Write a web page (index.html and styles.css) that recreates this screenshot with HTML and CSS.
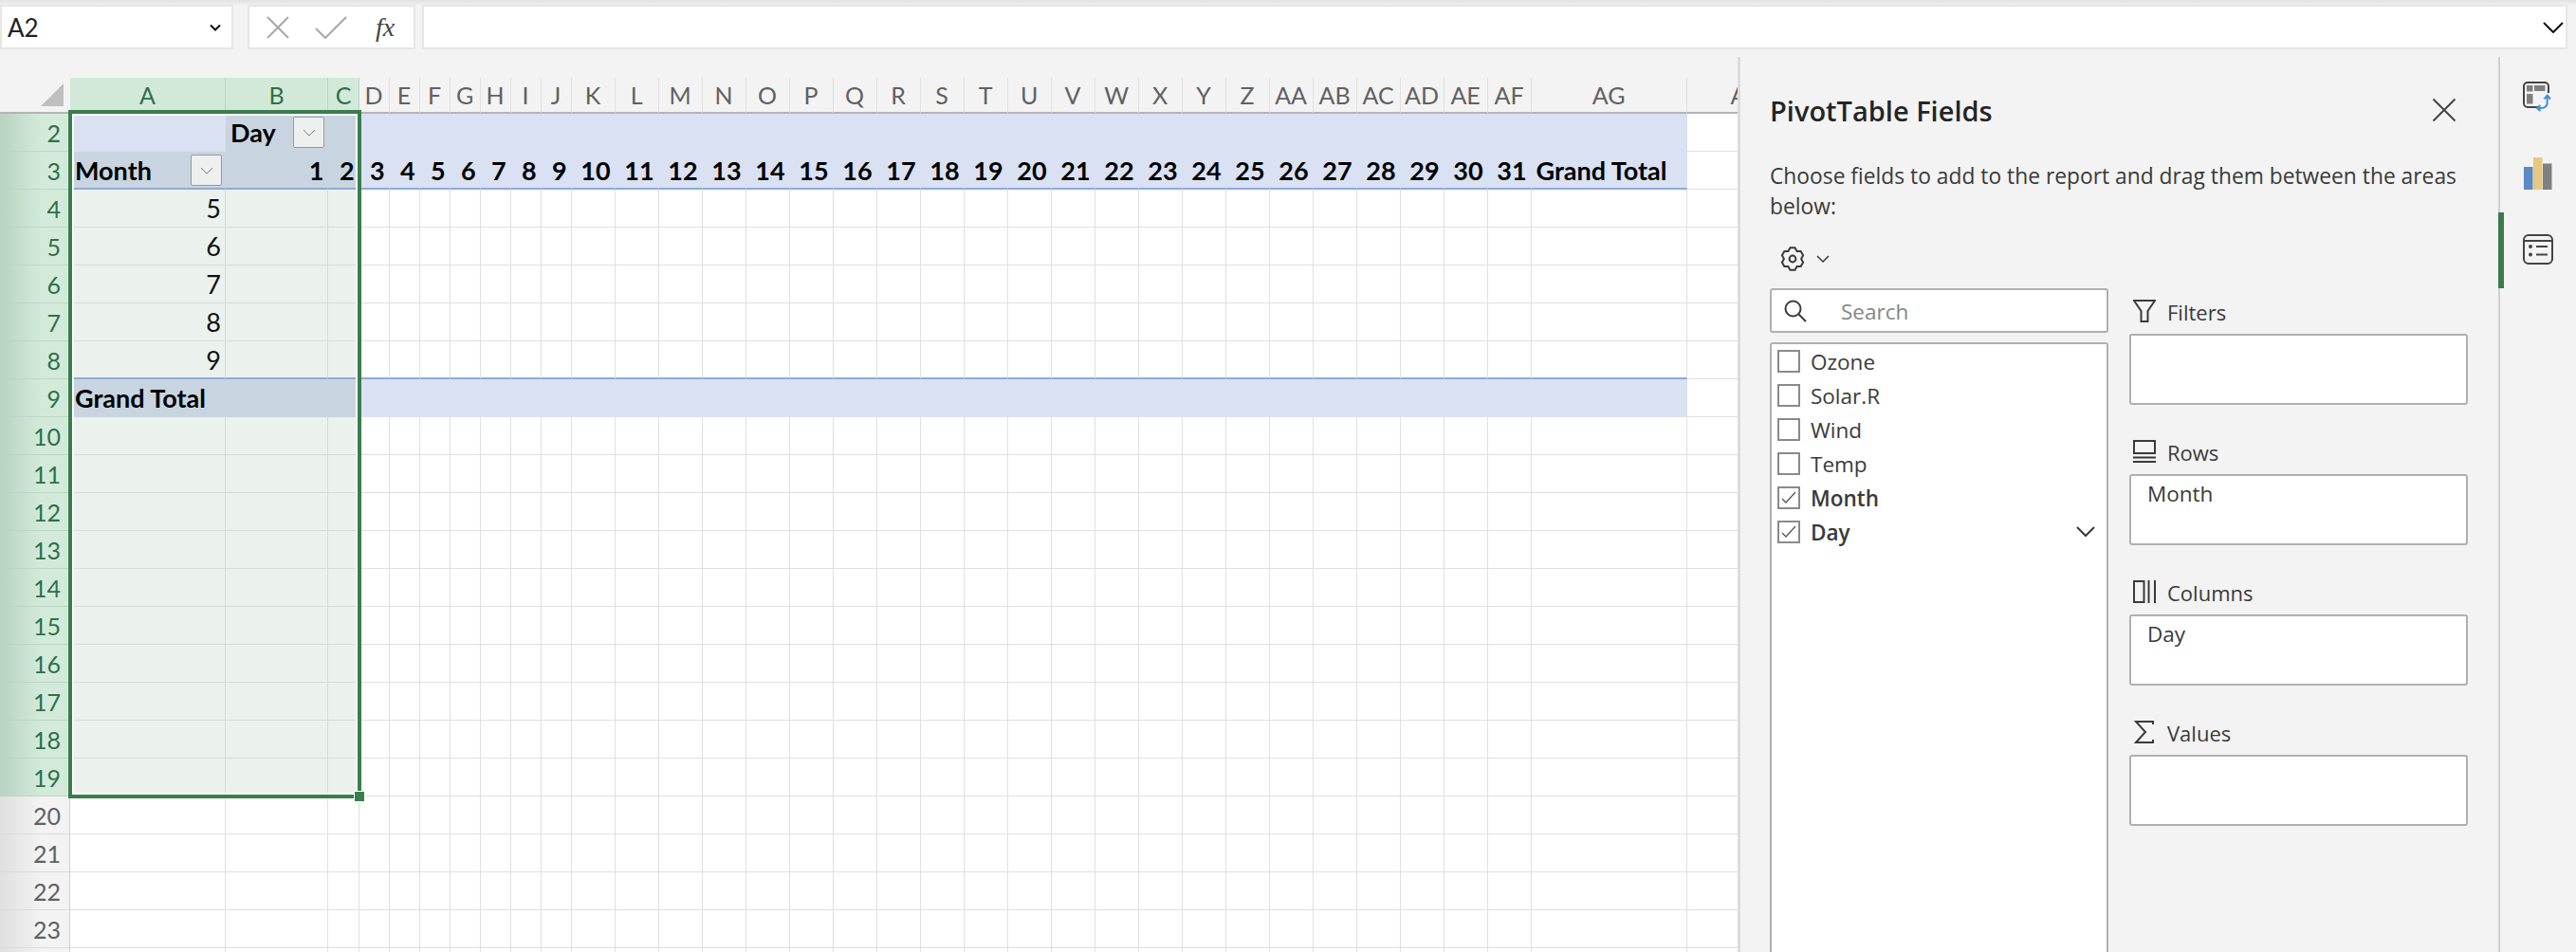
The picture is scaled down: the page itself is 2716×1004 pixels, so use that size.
FILE: index.html
```html
<!DOCTYPE html>
<html lang="en">
<head>
    <meta charset="UTF-8">
    <title>PivotTable Fields</title>
    <link rel="stylesheet" href="styles.css">
</head>
<body>
    <div class="formula-bar">
        <div class="name-box">
            <span>A2</span>
            <svg class="chev-black" width="12" height="8" viewBox="0 0 12 8"><path d="M1 1.5l5 5 5-5"/></svg>
        </div>
        <div class="formula-buttons">
            <svg class="fb-icon" width="26" height="26" viewBox="0 0 26 26"><path d="M2 2l22 22M24 2L2 24"/></svg>
            <svg class="fb-icon" width="34" height="24" viewBox="0 0 34 24"><path d="M1 13l10 10L33 1"/></svg>
            <span class="fx">fx</span>
        </div>
        <div class="formula-input">
            <svg class="chev-black" width="22" height="12" viewBox="0 0 22 12"><path d="M1 1l10 10L21 1"/></svg>
        </div>
    </div>

    <div class="main">
        <div class="sheet">
            <div class="grid" id="grid"></div>
            <div class="selection"><div class="handle"></div></div>
        </div>

        <div class="panel">
            <div class="panel-head">
                <div class="panel-title">PivotTable Fields</div>
                <svg class="close-icon" width="26" height="26" viewBox="0 0 26 26"><path d="M1.5 1.5l23 23M24.5 1.5l-23 23"/></svg>
            </div>
            <p class="panel-desc">Choose fields to add to the report and drag them between the areas below:</p>
            <div class="tools">
                <svg class="line-icon" width="28" height="28" viewBox="0 0 28 28">
                    <path d="M11.5 2.3h5l2.15 3.75 3.97-.02 2.49 4.32-2 3.65 2 3.65-2.49 4.32-3.97-.02-2.15 3.75h-5l-2.15-3.75-3.97.02-2.49-4.32 2-3.65-2-3.65 2.49-4.32 3.97.02z"/>
                    <circle cx="14" cy="14" r="3.4"/>
                </svg>
                <svg class="line-icon thin" width="14" height="8" viewBox="0 0 14 8"><path d="M1 1l6 6 6-6"/></svg>
            </div>

            <div class="panel-body">
                <div class="fields">
                    <div class="search">
                        <svg class="line-icon" width="24" height="24" viewBox="0 0 24 24"><circle cx="9.5" cy="9.5" r="8"/><path d="M15 15l8 8"/></svg>
                        <span>Search</span>
                    </div>
                    <div class="field-list">
                        <div class="field"><span class="check"></span>Ozone</div>
                        <div class="field"><span class="check"></span>Solar.R</div>
                        <div class="field"><span class="check"></span>Wind</div>
                        <div class="field"><span class="check"></span>Temp</div>
                        <div class="field on">
                            <span class="check"><svg width="16" height="14" viewBox="0 0 16 14"><path d="M1 8l4 4L15 1"/></svg></span>Month
                        </div>
                        <div class="field on">
                            <span class="check"><svg width="16" height="14" viewBox="0 0 16 14"><path d="M1 8l4 4L15 1"/></svg></span>Day
                            <svg class="line-icon field-chev" width="20" height="12" viewBox="0 0 20 12"><path d="M1 1l9 9 9-9"/></svg>
                        </div>
                    </div>
                </div>

                <div class="areas">
                    <div class="area">
                        <div class="area-label">
                            <svg class="line-icon" width="24" height="24" viewBox="0 0 24 24"><path d="M1 1h22l-7.5 11v11h-7V12z"/></svg>
                            <span>Filters</span>
                        </div>
                        <div class="area-box"></div>
                    </div>
                    <div class="area">
                        <div class="area-label">
                            <svg class="line-icon" width="24" height="24" viewBox="0 0 24 24"><path d="M1 1h22v13H1zM0 18.500h24M0 23h24"/></svg>
                            <span>Rows</span>
                        </div>
                        <div class="area-box">Month</div>
                    </div>
                    <div class="area">
                        <div class="area-label">
                            <svg class="line-icon" width="24" height="24" viewBox="0 0 24 24"><path d="M1 1h10.500v22H1zM16.500 0v24M23 0v24"/></svg>
                            <span>Columns</span>
                        </div>
                        <div class="area-box">Day</div>
                    </div>
                    <div class="area">
                        <div class="area-label">
                            <svg class="line-icon" width="24" height="24" viewBox="0 0 24 24"><path d="M21 4V1H3l10 11L3 23h18v-3"/></svg>
                            <span>Values</span>
                        </div>
                        <div class="area-box"></div>
                    </div>
                </div>
            </div>
        </div>

        <div class="rail">
            <div class="rail-mark"></div>
            <svg width="32" height="33" viewBox="0 0 32 33">
                <path class="rail-line" d="M16 27H5a4 4 0 0 1-4-4V5a4 4 0 0 1 4-4h18a4 4 0 0 1 4 4v7"/>
                <path class="rail-block" d="M4 4h6.500v6.500H4zM12 4h11.500v6H12zM4 13h6.500v10.500H4z"/>
                <path class="rail-arrow" d="M25.700 16v6q0 6-6.700 6h-3.500M22.500 18.500l3.200-4 3.300 4M18.500 25l-3.500 3 3.500 3"/>
            </svg>
            <svg width="30" height="34" viewBox="0 0 30 34">
                <path fill="#5b8ac4" d="M0 10h9.500v24H0z"/>
                <path fill="#e6c880" d="M10 0h9.500v34H10z"/>
                <path fill="#808080" d="M20 6.500h9.500V34H20z"/>
            </svg>
            <svg width="32" height="32" viewBox="0 0 32 32">
                <path class="rail-line" d="M6 1h20a5 5 0 0 1 5 5v20a5 5 0 0 1-5 5H6a5 5 0 0 1-5-5V6a5 5 0 0 1 5-5zM1 7h30M14 13h12M14 21.500h12"/>
                <circle class="rail-dot" cx="8" cy="13" r="2"/>
                <circle class="rail-dot" cx="8" cy="21.500" r="2"/>
            </svg>
        </div>
    </div>

    <script src="app.js"></script>
</body>
</html>
```

FILE: styles.css
```css
* {
    box-sizing: border-box;
}

body {
    margin: 0;
    height: 100vh;
    overflow: hidden;
    background: #f3f3f3;
    font-family: "Open Sans", sans-serif;
    color: #3a3a3a;
}

.chev-black {
    fill: none;
    stroke: #111;
    stroke-width: 2;
}

/* formula bar */
.formula-bar {
    height: 60px;
    padding: 5px 9px 8px 0;
    display: flex;
    gap: 7px;
    background: linear-gradient(#e2e2e2, #f3f3f3 6px);
}

.name-box,
.formula-buttons,
.formula-input {
    background: white;
    border: 2px solid #e6e6e6;
    display: flex;
    align-items: center;
}

.name-box {
    width: 246px;
    padding: 0 11px 0 6px;
    margin-right: 8px;
    justify-content: space-between;
    font: 26px Lato, sans-serif;
    color: #222;
}

.formula-buttons {
    width: 177px;
    padding-left: 17px;
    gap: 26px;
}

.fb-icon {
    fill: none;
    stroke: #a8a8a8;
    stroke-width: 2;
}

.fx {
    font: italic 28px "Liberation Serif", serif;
    color: #444;
    margin-left: 4px;
}

.formula-input {
    flex: 1;
    justify-content: flex-end;
    padding-right: 2px;
}

/* sheet */
.main {
    display: flex;
    height: calc(100vh - 60px);
    overflow: hidden;
}

.sheet {
    position: relative;
    width: 1832px;
    padding-top: 22px;
    overflow: hidden;
}

.grid {
    display: grid;
    grid-template-columns: 74px 164px 108.4px 32.2px repeat(7, 32px) repeat(22, 46px) 164px 129px;
    grid-template-rows: 38px;
    grid-auto-rows: 40px;
    background: white;
    font-family: Lato, sans-serif;
}

.corner,
.col-head {
    background: #f3f3f3;
    border-bottom: 2px solid #b4b4b4;
}

.corner {
    display: flex;
    justify-content: flex-end;
    align-items: flex-end;
    padding: 0 7px 6px 0;
}

.corner-mark {
    width: 24px;
    height: 24px;
    background: #bfbfbf;
    clip-path: polygon(100% 0, 100% 100%, 0 100%);
}

.col-head {
    display: flex;
    align-items: center;
    justify-content: center;
    border-right: 1px solid #e0e0e0;
    font-size: 25px;
    color: #616161;
    white-space: nowrap;
}

.col-head.sel {
    background: #d2e9da;
    border-right-color: #b4d8c1;
    color: #2e7048;
}

.row-head {
    display: flex;
    align-items: center;
    justify-content: flex-end;
    padding-right: 9px;
    background: linear-gradient(90deg, #dfdfdf, #f3f3f3 60%);
    border-right: 1px solid #d0d0d0;
    border-bottom: 1px solid #dcdcdc;
    font-size: 25px;
    color: #616161;
}

.row-head.sel {
    background: linear-gradient(90deg, #b8d3c2, #d3eadb 60%);
    border-bottom-color: #bcd6c6;
    color: #2e7048;
}

.cell {
    position: relative;
    display: flex;
    align-items: center;
    padding: 0 5px;
    border-right: 1px solid #e0e0e0;
    border-bottom: 1px solid #e0e0e0;
    font-size: 27px;
    color: #111;
    white-space: nowrap;
}

.cell.num {
    justify-content: flex-end;
    padding-right: 4px;
}

.cell.sel {
    background: #ebf1ed;
    border-color: #d6dcd8;
}

.cell.band {
    background: #d9e1f2;
    border-color: transparent;
    font-weight: bold;
    color: black;
}

.cell.band.sel {
    background: #c8d5e0;
}

.cell.band.active {
    background: #d9e1f2;
}

.cell.rule {
    border-bottom: 2px solid #8ea9db;
}

.cell-filter {
    position: absolute;
    top: 3px;
    width: 33px;
    height: 33px;
    display: flex;
    align-items: center;
    justify-content: center;
    background: #edf0ee;
    border: 1px solid #9a9a9a;
    border-radius: 2px;
}

.cell-filter svg {
    fill: none;
    stroke: #7a7a7a;
    stroke-width: 1;
}

.selection {
    position: absolute;
    left: 71.500px;
    top: 56px;
    width: 309.500px;
    height: 726px;
    border: 4px solid #3a7d4c;
    box-shadow: inset 0 0 0 2px white;
    pointer-events: none;
}

.handle {
    position: absolute;
    right: -7px;
    bottom: -7px;
    width: 10px;
    height: 10px;
    background: #3a7d4c;
    outline: 1px solid white;
}

/* pivot panel */
.panel {
    width: 804px;
    padding: 36px 32px 0 31px;
    border-left: 3px solid #dcdcdc;
    border-right: 2px solid #cfcfcf;
}

.panel-head {
    height: 40px;
    display: flex;
    align-items: center;
    justify-content: space-between;
    padding-right: 12px;
}

.panel-title {
    font-size: 29px;
    font-weight: 600;
    color: #252525;
}

.close-icon {
    fill: none;
    stroke: #444;
    stroke-width: 2;
}

.panel-desc {
    margin: 34px 0 0;
    font-size: 22.800px;
    line-height: 32px;
}

.tools {
    margin-top: 22px;
    height: 34px;
    padding-left: 10px;
    display: flex;
    align-items: center;
    gap: 11px;
}

.line-icon {
    flex: none;
    fill: none;
    stroke: #3a3a3a;
    stroke-width: 2;
}

.line-icon.thin {
    stroke-width: 1.500;
}

.panel-body {
    margin-top: 14px;
    display: flex;
    gap: 22px;
}

.fields {
    width: 357px;
}

.search {
    height: 47px;
    display: flex;
    align-items: center;
    gap: 36px;
    padding: 0 0 0 13px;
    background: white;
    border: 2px solid #b0b0b0;
    border-radius: 3px;
    font-size: 22.500px;
    color: #858585;
}

.search span {
    padding-top: 2px;
}

.field-list {
    height: 660px;
    margin-top: 10px;
    background: white;
    border: 2px solid #b0b0b0;
    border-radius: 3px;
}

.field {
    height: 36px;
    display: flex;
    align-items: center;
    padding-left: 6px;
    font-size: 22.500px;
}

.field.on {
    font-weight: 600;
}

.check {
    width: 24px;
    height: 24px;
    margin-right: 11px;
    display: flex;
    align-items: center;
    justify-content: center;
    border: 2px solid #8a8a8a;
}

.check svg {
    fill: none;
    stroke: #555;
    stroke-width: 1.300;
}

.field-chev {
    margin-left: auto;
    margin-right: 12px;
}

.areas {
    width: 357px;
    padding-top: 12px;
}

.area {
    margin-bottom: 37px;
}

.area-label {
    height: 24px;
    padding-left: 4px;
    display: flex;
    align-items: center;
    gap: 12px;
    font-size: 22px;
    font-weight: 500;
}

.area-label span {
    padding-top: 2px;
}

.area-box {
    height: 75px;
    margin-top: 12px;
    padding: 2px 17px;
    background: white;
    border: 2px solid #b0b0b0;
    border-radius: 3px;
    font-size: 22.500px;
    line-height: 34px;
}

/* right rail */
.rail {
    position: relative;
    flex: 1;
    display: flex;
    flex-direction: column;
    align-items: center;
    gap: 47px;
    padding: 26px 0 0 0;
}

.rail-mark {
    position: absolute;
    left: -2px;
    top: 164px;
    width: 6px;
    height: 80px;
    background: #3a7d4c;
}

.rail-line {
    fill: none;
    stroke: #444;
    stroke-width: 2;
}

.rail-block {
    fill: #808080;
}

.rail-arrow {
    fill: none;
    stroke: #3f8fd8;
    stroke-width: 2;
}

.rail-dot {
    fill: #444;
}
```

FILE: app.js
```js
const grid = document.getElementById('grid');

const letters = 'ABCDEFGHIJKLMNOPQRSTUVWXYZ'.split('');
const columns = [...letters, 'AA', 'AB', 'AC', 'AD', 'AE', 'AF', 'AG', 'AH'];
const lastBand = columns.indexOf('AG');
const chevron = '<svg width="14" height="8" viewBox="0 0 14 8"><path d="M1 1l6 6 6-6"/></svg>';

function addDiv(className, text) {
    const el = document.createElement('div');
    el.className = className;
    if (text !== undefined) el.textContent = text;
    grid.appendChild(el);
    return el;
}

function addFilter(cell, right) {
    const button = document.createElement('div');
    button.className = 'cell-filter';
    button.style.right = right + 'px';
    button.innerHTML = chevron;
    cell.appendChild(button);
}

// what the pivot table shows, by row and column index
function cellText(row, col) {
    if (row === 2 && col === 1) return 'Day';
    if (row === 3) {
        if (col === 0) return 'Month';
        if (col === lastBand) return 'Grand Total';
        if (col >= 1 && col <= 31) return String(col);
    }
    if (row >= 4 && row <= 8 && col === 0) return String(row + 1);
    if (row === 9 && col === 0) return 'Grand Total';
    return '';
}

const corner = addDiv('corner');
corner.appendChild(document.createElement('div')).className = 'corner-mark';

columns.forEach((name, col) => {
    addDiv('col-head' + (col < 3 ? ' sel' : ''), name);
});

for (let row = 2; row <= 24; row++) {
    const rowSelected = row <= 19;
    // row 24 only shows its top edge, so it gets no number
    addDiv('row-head' + (rowSelected ? ' sel' : ''), row < 24 ? row : '');

    columns.forEach((name, col) => {
        const text = cellText(row, col);
        let className = 'cell';
        if (rowSelected && col < 3) className += ' sel';
        if ((row === 2 || row === 3 || row === 9) && col <= lastBand) className += ' band';
        if ((row === 3 || row === 8) && col <= lastBand) className += ' rule';
        if (row === 2 && col === 0) className += ' active';
        if (/^\d+$/.test(text)) className += ' num';

        const cell = addDiv(className, text);
        if (row === 2 && col === 1) addFilter(cell, 3);
        if (row === 3 && col === 0) addFilter(cell, 3);
    });
}
```
